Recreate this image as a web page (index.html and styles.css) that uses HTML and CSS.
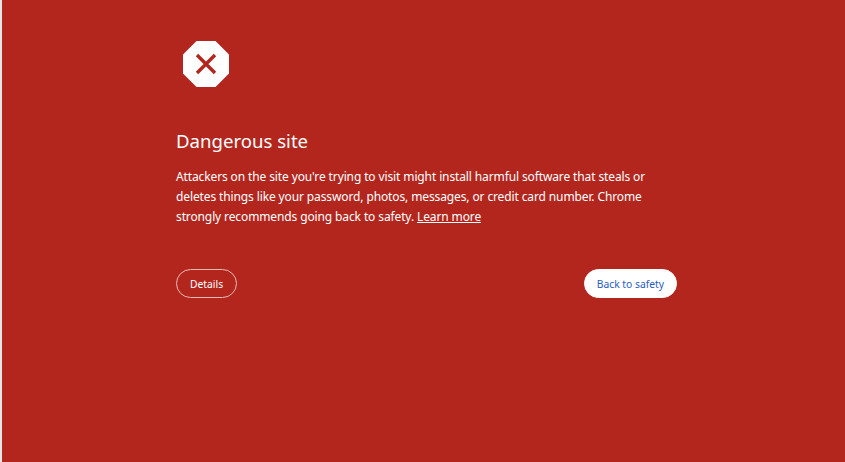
FILE: index.html
```html
<!DOCTYPE html>
<html lang="en">
<head>
    <meta charset="UTF-8">
    <meta name="viewport" content="width=device-width, initial-scale=1.0">
    <title>Security error</title>
    <link rel="stylesheet" href="styles.css">
</head>
<body>
    <main class="interstitial">
        <svg class="icon" width="46" height="46" viewBox="0 0 46 46" aria-hidden="true">
            <polygon points="13.5,0 32.5,0 46,13.5 46,32.5 32.5,46 13.5,46 0,32.5 0,13.5" fill="#fff"/>
            <path d="M14 14 L32 32 M32 14 L14 32" stroke="#b3261e" stroke-width="3.4" fill="none"/>
        </svg>
        <h1>Dangerous site</h1>
        <p class="message">Attackers on the site you're trying to visit might install harmful software that steals or deletes things like your password, photos, messages, or credit card number. Chrome strongly recommends going back to safety. <a href="#">Learn more</a></p>
        <div class="actions">
            <button class="details-btn" type="button">Details</button>
            <button class="back-btn" type="button">Back to safety</button>
        </div>
    </main>
</body>
</html>
```

FILE: styles.css
```css
/* Page */
body {
    margin: 0;
    height: 462px;
    overflow: hidden;
    background-color: #b3261e;
    border-left: 2px solid #e6e6e6;
    box-sizing: border-box;
    color: #fff;
    font-family: 'Noto Sans', sans-serif;
}

.interstitial {
    width: 501px;
    margin-left: 174px;
    padding-top: 41px;
}

.icon {
    display: block;
    margin-left: 7px;
}

h1 {
    margin: 40px 0 0;
    font-size: 18.6px;
    font-weight: 400;
    line-height: 27px;
}

.message {
    margin: 13px 0 0;
    font-size: 12px;
    letter-spacing: -0.12px;
    line-height: 20px;
}

.message a {
    color: #fff;
}

/* Buttons */
.actions {
    display: flex;
    justify-content: space-between;
    margin-top: 42px;
}

.actions button {
    height: 29px;
    border-radius: 15px;
    font-family: inherit;
    font-size: 10.3px;
}

.details-btn {
    padding: 0 13px;
    background: transparent;
    border: 1px solid #eab9b6;
    color: #fff;
}

.back-btn {
    padding: 0 12px;
    background: #fff;
    border: 1px solid #fff;
    color: #2a5bc4;
}
```
